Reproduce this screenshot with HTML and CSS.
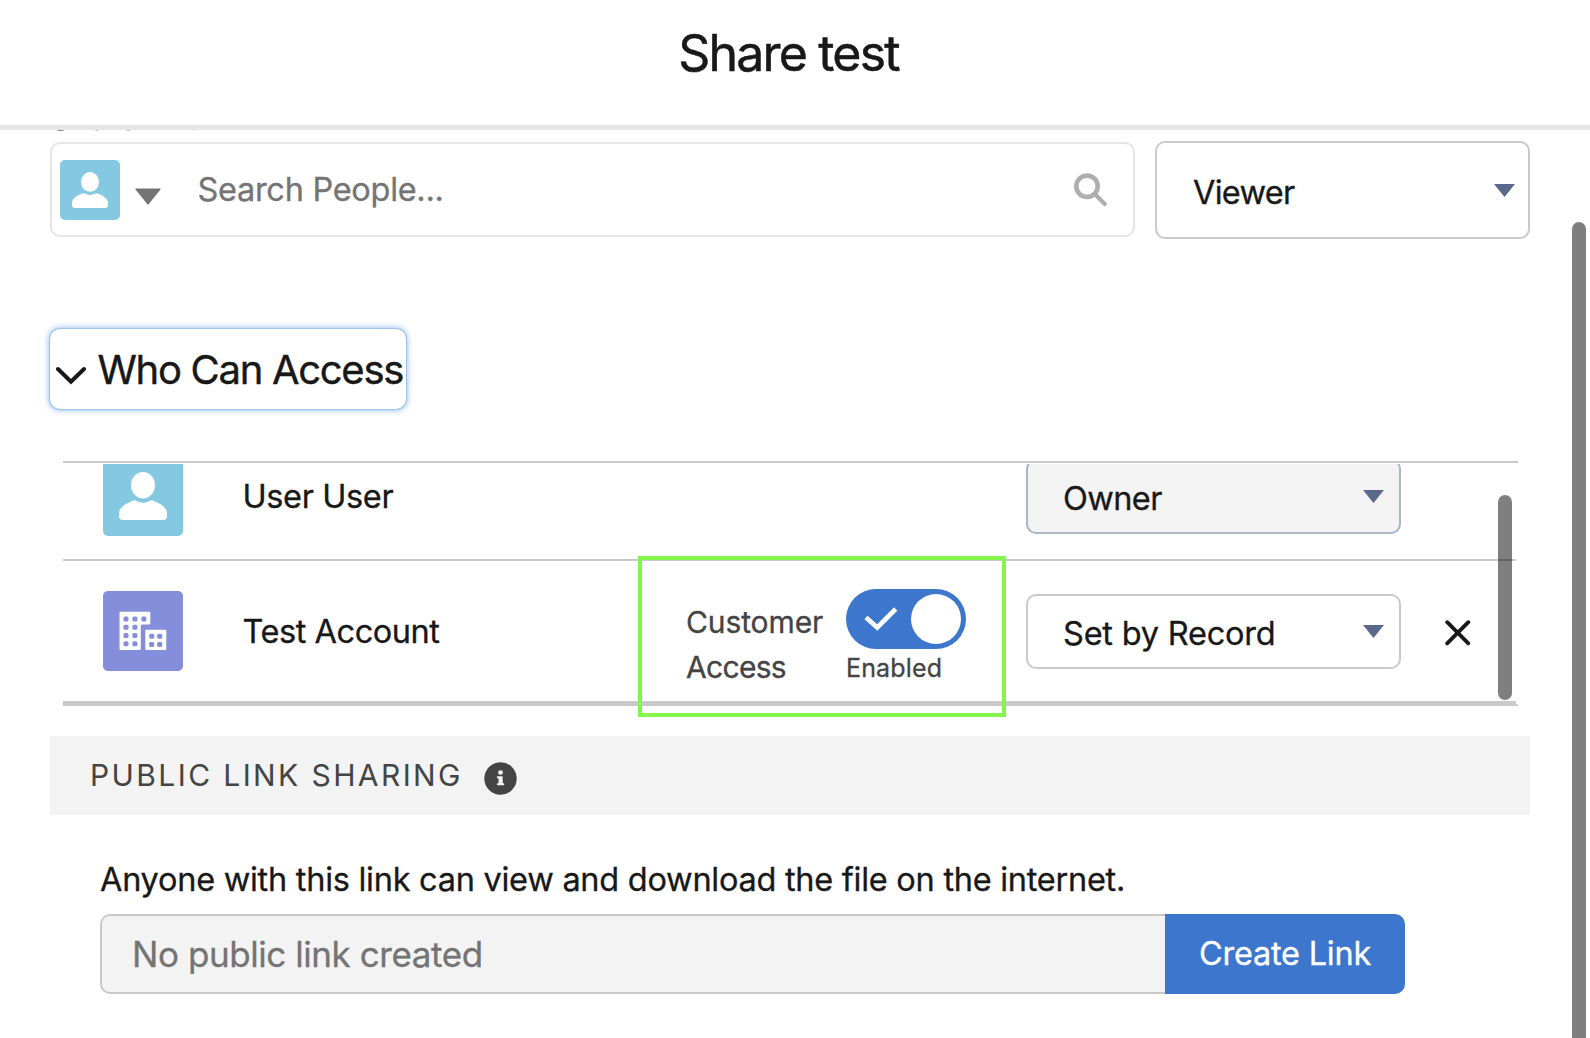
FILE: index.html
```html
<!DOCTYPE html>
<html lang="en">
<head>
<meta charset="utf-8">
<title>Share test</title>
<link rel="stylesheet" href="styles.css">
</head>
<body>
<svg class="defs" width="0" height="0" aria-hidden="true">
  <symbol id="person" viewBox="0 0 80 80">
    <ellipse cx="40" cy="29.2" rx="12" ry="13.2"/>
    <path d="M30.5 44.4Q31.8 44 33 44.8Q40 48.6 47 44.8Q48.2 44 49.5 44.4C56 47 64 50.5 64 57.5V60Q64 64 60 64H20Q16 64 16 60V57.5C16 50.5 24 47 30.5 44.4Z"/>
  </symbol>
</svg>
<div class="dialog">
  <header class="dialog-header"><h1 class="title">Share test</h1></header>
  <main class="dialog-body">
    <svg class="label-edge" width="150" height="1" viewBox="0 0 150 1" aria-hidden="true"><path d="M7.5 0h6v1h-6z" fill="#888"/><path d="M45.500 0h3v1h-3zM76.500 0h4v1h-4z" fill="#c4c4c4"/><path d="M142.500 0h2v1h-2z" fill="#e6e6e6"/></svg>
    <div class="search-row">
      <div class="search-box">
        <span class="avatar avatar-small"><svg viewBox="0 0 80 80"><use href="#person"/></svg></span>
        <svg class="caret" width="26" height="17" viewBox="0 0 26 17"><path d="M1 .5H25Q26.200 .5 25.300 1.700L13.800 16Q13 17 12.200 16L.7 1.700Q-.2 .5 1 .5Z" fill="#747474"/></svg>
        <span class="search-text">Search People...</span>
        <svg class="magnifier" width="34" height="34" viewBox="0 0 34 34" fill="none" stroke="#aeaeae"><circle cx="13" cy="13.300" r="10.700" stroke-width="4.600"/><path d="M21.500 21.800L30.800 31" stroke-width="4.200" stroke-linecap="round"/></svg>
      </div>
      <div class="select select-viewer"><span class="t-viewer">Viewer</span><svg class="arrow" viewBox="0 0 21 13"><path d="M0 0h21L10.500 13z"/></svg></div>
    </div>

    <button class="section-toggle" type="button">
      <svg width="30" height="20" viewBox="0 0 30 20" fill="none" stroke="#181818" stroke-width="4" stroke-linecap="round"><path d="M2 3L15 15.700L28 3"/></svg>
      <span>Who Can Access</span>
    </button>

    <div class="access-table">
      <div class="row row-user">
        <div class="row-inner">
          <span class="avatar"><svg viewBox="0 0 80 80"><use href="#person"/></svg></span>
          <span class="name t-user">User User</span>
          <div class="select select-row select-disabled"><span class="t-owner">Owner</span><svg class="arrow" viewBox="0 0 21 13"><path d="M0 0h21L10.500 13z"/></svg></div>
        </div>
      </div>
      <div class="row row-account">
        <span class="avatar avatar-account"><svg viewBox="0 0 80 80">
          <path d="M17.500 20.700H46.300Q47.300 20.700 47.300 21.700V32.500Q47.300 33.500 46.300 33.500H39.500Q37.800 33.500 37.800 35.200V58Q37.800 59 36.800 59H17.500Q16.500 59 16.500 58V21.700Q16.500 20.700 17.500 20.700ZM43.300 38.700H62.300Q63.300 38.700 63.300 39.700V58Q63.300 59 62.300 59H43.300Q42.300 59 42.300 58V39.700Q42.300 38.700 43.300 38.700Z"/>
          <g fill="#848edb"><rect x="20.500" y="25.500" width="5" height="5" rx="1.500"/><rect x="29.400" y="25.500" width="5" height="5" rx="1.500"/><rect x="38.300" y="25.500" width="5" height="5" rx="1.500"/><rect x="20.500" y="33.800" width="5" height="5" rx="1.500"/><rect x="29.400" y="33.800" width="5" height="5" rx="1.500"/><rect x="20.500" y="42" width="5" height="5" rx="1.500"/><rect x="29.400" y="42" width="5" height="5" rx="1.500"/><rect x="20.500" y="50.300" width="5" height="5" rx="1.500"/><rect x="29.400" y="50.300" width="5" height="5" rx="1.500"/><rect x="46.200" y="42.700" width="5" height="5" rx="1.500"/><rect x="54.200" y="42.700" width="5" height="5" rx="1.500"/><rect x="46.200" y="50.900" width="5" height="5" rx="1.500"/><rect x="54.200" y="50.900" width="5" height="5" rx="1.500"/></g>
        </svg></span>
        <span class="name t-account">Test Account</span>
        <div class="customer-access">
          <div class="access-label"><span class="t-customer">Customer</span><span class="t-access">Access</span></div>
          <div class="switch-group">
            <div class="switch"><svg width="34" height="25" viewBox="0 0 34 25" fill="none" stroke="#fff" stroke-width="4.600"><path d="M2 10.500L13.200 20.500L31.700 2"/></svg><span class="knob"></span></div>
            <span class="switch-state">Enabled</span>
          </div>
        </div>
        <div class="select select-row"><span class="t-record">Set by Record</span><svg class="arrow" viewBox="0 0 21 13"><path d="M0 0h21L10.500 13z"/></svg></div>
        <svg class="close" width="26" height="26" viewBox="0 0 26 26" fill="none" stroke="#181818" stroke-width="3.800" stroke-linecap="round"><path d="M2.200 2.200L23.300 23.300M23.300 2.200L2.200 23.300"/></svg>
        <span class="highlight"></span>
      </div>
      <span class="scrollbar scrollbar-inner"></span>
    </div>

    <div class="link-heading">
      <h2>PUBLIC LINK SHARING</h2>
      <svg width="33" height="33" viewBox="0 0 33 33"><circle cx="16.500" cy="16.500" r="16.200" fill="#444"/><g fill="#f3f3f3"><ellipse cx="16.500" cy="10.500" rx="2.400" ry="2.200"/><path d="M13.300 14.200H18.300Q18.700 14.200 18.700 14.800V21.300H19.600Q20.200 21.300 20.200 21.900V22.700Q20.200 23.300 19.600 23.300H13.500Q12.900 23.300 12.900 22.700V21.900Q12.900 21.300 13.500 21.300H14.500V16.200H13.300Q12.900 16.200 12.900 15.700V14.700Q12.900 14.200 13.300 14.200Z"/></g></svg>
    </div>
    <p class="link-text">Anyone with this link can view and download the file on the internet.</p>
    <div class="link-row">
      <div class="link-input">No public link created</div>
      <button class="create" type="button">Create Link</button>
    </div>
    <span class="scrollbar scrollbar-outer"></span>
  </main>
</div>
</body>
</html>
```
FILE: styles.css
```css
* { box-sizing: border-box; }
body { margin: 0; background: #fff; color: #181818; font-family: Inter, "Liberation Sans", sans-serif; font-size: 32.5px; line-height: 40px; -webkit-text-stroke: .3px currentColor; }
h1, h2, p { margin: 0; font-weight: 400; }
button { margin: 0; padding: 0; border: 0; font: inherit; color: inherit; }
svg { display: block; flex: none; }
span { white-space: nowrap; }
.defs { position: absolute; }
.dialog { height: 1038px; overflow: hidden; display: flex; flex-direction: column; }
.dialog-header { height: 130px; flex: none; border-bottom: 5px solid #e5e5e5; padding: 23px 13px 0 0; text-align: center; }
.title { font-size: 50px; line-height: 60px; letter-spacing: -1.8px; -webkit-text-stroke-width: .5px; }
.dialog-body { position: relative; flex: 1; padding: 0 60px 0 50px; }

.search-row { display: flex; gap: 20px; padding-top: 10px; }
.search-box { width: 1085px; height: 95px; margin-top: 1px; border: 2px solid #e5e5e5; border-radius: 10px; display: flex; align-items: center; padding: 0 25px 0 8px; }
.caret { margin: 14px 0 0 14.500px; }
.search-text { margin-left: 37px; color: #747474; letter-spacing: -.297px; }
.magnifier { margin-left: auto; }

.avatar { display: block; flex: none; width: 80px; height: 80px; border-radius: 5px; background: #84c8e2; fill: #fff; overflow: hidden; }
.avatar-small { width: 60px; height: 60px; }
.avatar-account { background: #848edb; }

.select { width: 375px; border: 2px solid #c9c9c9; border-radius: 10px; display: flex; align-items: center; justify-content: space-between; padding: 5px 15px 0 35px; }
.select-viewer { height: 98px; padding: 5px 13px 0 36px; }
.select-row { height: 75px; }
.select-disabled { background: #f3f3f3; border-color: #aab7c7; }
.arrow { width: 21px; height: 13px; margin-bottom: 5px; fill: #5a698b; }
.select-viewer .arrow { margin-bottom: 4px; }
.t-viewer { letter-spacing: -.72px; }
.t-owner { letter-spacing: -.6px; }
.t-record { letter-spacing: -.22px; }

.section-toggle { display: flex; align-items: center; width: 356px; height: 80px; margin-top: 90px; padding-left: 5.500px; border-radius: 10px; background: #fff; font-size: 40px; letter-spacing: -1.3px; box-shadow: 0 0 0 1px #9fc3ea, 0 0 6px 1px #86b6ee; -webkit-text-stroke-width: .4px; }
.section-toggle svg { margin: 13px 12px 0 0; }
.section-toggle span { padding-top: 2px; }

.access-table { position: relative; margin: 52px 12px 0 13px; padding-top: 1px; border-top: 2px solid #c9c9c9; border-bottom: 2px solid #c9c9c9; }
.row { width: 1453px; padding-left: 40px; border-bottom: 2px solid #c9c9c9; }
.row-user { height: 97px; overflow: hidden; }
.row-inner { display: flex; align-items: center; height: 80px; margin-top: -8px; }
.row-account { position: relative; height: 143px; border-bottom-width: 3px; display: flex; align-items: center; }
.name { padding-top: 2px; }
.row-user .name { width: 783px; margin-left: 59.500px; }
.row-user .select { margin: 0 0 0 .5px; }
.row-account .name { width: 443.500px; margin-left: 59.500px; }
.t-user { letter-spacing: -.38px; }
.t-account { letter-spacing: -.45px; }
/* Label wraps over two lines beside the toggle */
.customer-access { display: flex; align-items: flex-start; width: 340px; height: 104px; margin-top: 20px; color: #444; }
.access-label { display: flex; flex-direction: column; width: 160px; padding-top: 11px; font-size: 30px; line-height: 45px; }
.t-customer { letter-spacing: -.1px; }
.t-access { letter-spacing: -.7px; }
.switch { display: flex; align-items: center; justify-content: space-between; width: 120px; height: 60px; padding: 0 5px 0 18px; border-radius: 30px; background: #3c76cd; }
.knob { width: 50px; height: 50px; border-radius: 50%; background: #fff; }
.switch-state { display: block; font-size: 25px; line-height: 38px; letter-spacing: .15px; }
.close { margin: 3px 0 0 44px; }
/* Callout frame drawn over the row and its borders */
.highlight { position: absolute; left: 575px; top: -5px; width: 368px; height: 161px; border: 4px solid #84f54b; }
.scrollbar { position: absolute; width: 14px; border-radius: 7px; background: rgba(0, 0, 0, .5); }
.scrollbar-inner { left: 1435px; top: 32px; height: 205px; }
.scrollbar-outer { left: 1572px; top: 92px; height: 900px; }

.link-heading { display: flex; align-items: center; height: 79px; margin-top: 30px; padding-left: 40px; background: #f3f3f3; color: #444; -webkit-text-stroke-width: 0; }
.link-heading h2 { padding-bottom: 2px; font-size: 30px; letter-spacing: 2.4px; }
.link-heading svg { margin: 6px 0 0 21px; }
.link-text { margin: 45px 0 0 50px; letter-spacing: -.267px; }
.link-row { display: flex; margin: 14px 0 0 50px; height: 80px; }
.link-input { width: 1065px; padding: 18px 0 0 30px; border: 2px solid #c9c9c9; border-right: 0; border-radius: 10px 0 0 10px; background: #f3f3f3; color: #747474; font-size: 35px; letter-spacing: -.43px; }
.create { width: 240px; border-radius: 0 10px 10px 0; background: #3c76cd; color: #fff; letter-spacing: -.24px; }
```
